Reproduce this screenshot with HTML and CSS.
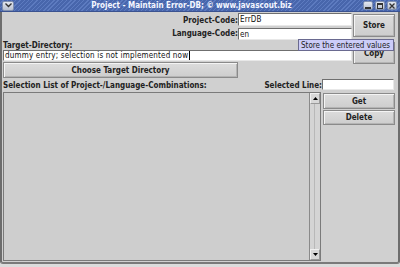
FILE: index.html
```html
<!DOCTYPE html>
<html>
<head>
<meta charset="utf-8">
<link rel="stylesheet" href="styles.css">
</head>
<body>
<div class="window">
  <div class="titlebar">
    <span class="wbtn menu"><svg width="7" height="5" viewBox="0 0 7 5"><path d="M0.5 0.5 L3.5 3.5 L6.5 0.5" fill="none" stroke="#333" stroke-width="1.4"/></svg></span>
    <span class="title">Project - Maintain Error-DB; © www.javascout.biz</span>
    <span class="ctrls">
      <span class="wbtn"><svg width="6" height="6" viewBox="0 0 6 6"><rect x="0" y="4" width="6" height="2" fill="#333"/></svg></span>
      <span class="wbtn"><svg width="6" height="6" viewBox="0 0 6 6"><rect x="0.5" y="0.5" width="5" height="5" fill="none" stroke="#333"/><rect x="0" y="0" width="6" height="2" fill="#333"/></svg></span>
      <span class="wbtn"><svg width="6" height="6" viewBox="0 0 6 6"><path d="M0.5 0.5 L5.5 5.5 M5.5 0.5 L0.5 5.5" stroke="#333" stroke-width="1.3"/></svg></span>
    </span>
  </div>
  <div class="content">
    <label class="lbl right r1">Project-Code:</label>
    <div class="field f1"><span class="txt">ErrDB</span></div>
    <button class="btn store">Store</button>

    <label class="lbl right r2">Language-Code:</label>
    <div class="field f2"><span class="txt">en</span></div>

    <label class="lbl r3">Target-Directory:</label>
    <button class="btn copy">Copy</button>

    <div class="field f4"><span class="txt">dummy entry; selection is not implemented now</span><span class="caret"></span></div>

    <button class="btn choose">Choose Target Directory</button>

    <div class="row6">
      <label class="lbl">Selection List of Project-/Language-Combinations:</label>
      <label class="lbl">Selected Line:</label>
    </div>
    <div class="field f6"></div>

    <div class="list">
      <div class="listarea"></div>
      <div class="scroll">
        <span class="arrow"><svg width="5" height="3" viewBox="0 0 5 3"><path d="M0 3 L2.5 0 L5 3 Z" fill="#000"/></svg></span>
        <span class="track"></span>
        <span class="arrow"><svg width="5" height="3" viewBox="0 0 5 3"><path d="M0 0 L2.5 3 L5 0 Z" fill="#000"/></svg></span>
      </div>
    </div>
    <div class="sidebtns">
      <button class="btn">Get</button>
      <button class="btn">Delete</button>
    </div>
  </div>
  <div class="tooltip">Store the entered values</div>
</div>
</body>
</html>
```

FILE: styles.css
```css
* { box-sizing: border-box; }
html, body { margin: 0; padding: 0; }
body {
  width: 400px;
  height: 267px;
  overflow: hidden;
  background: #dcdcdc;
  font-family: "DejaVu Sans Condensed", "DejaVu Sans", sans-serif;
}
.window {
  position: relative;
  width: 400px;
  height: 264px;
  background: #d0d0d0;
  border-left: 2px solid #6d6d6d;
  border-right: 2px solid #6d6d6d;
  border-bottom: 2px solid #7a7a7a;
  border-radius: 0 0 3px 3px;
  display: flex;
  flex-direction: column;
}
.titlebar {
  height: 12px;
  margin: 0 -2px;
  background: repeating-linear-gradient(135deg, #4866ac 0 2px, #5d7bc0 2px 3px);
  display: flex;
  align-items: center;
  padding: 0 3px 0 2px;
  border-bottom: 1px solid #3a5290;
}
.title {
  flex: 1;
  text-align: center;
  color: #f4f6ff;
  font-weight: bold;
  font-size: 8px;
  padding-left: 6px;
  white-space: nowrap;
}
.wbtn {
  width: 10px;
  height: 9px;
  background: linear-gradient(#e4e8f0, #b8c0d0);
  border: 1px solid #8090b0;
  border-radius: 2px;
  display: inline-flex;
  align-items: center;
  justify-content: center;
}
.menu { width: 12px; height: 10px; }
.ctrls { display: flex; gap: 2px; }

.content {
  flex: 1;
  display: grid;
  grid-template-columns: 235px 84px 30px 43px;
  grid-template-rows: 14px 13px 10px 11px 17px 14px 1fr;
  padding: 1px 0 1px 1px;
}
.lbl {
  font-size: 8px;
  font-weight: bold;
  color: #222;
  white-space: nowrap;
  align-self: center;
}
.right { text-align: right; }
.r1 { grid-column: 1; grid-row: 1; }
.r2 { grid-column: 1; grid-row: 2; }
.r3 { grid-column: 1 / 3; grid-row: 3; padding-top: 1px; }

.field {
  background: #fff;
  border-top: 1px solid #6f6f6f;
  border-left: 1px solid #6f6f6f;
  border-bottom: 1px solid #e8e8e8;
  border-right: 1px solid #e8e8e8;
  display: flex;
  align-items: center;
  padding-left: 1px;
  font-size: 8px;
  letter-spacing: 0.18px;
  color: #111;
  white-space: nowrap;
  overflow: hidden;
}
.caret { width: 1px; height: 9px; background: #000; margin-left: 1px; }
.f1 { grid-column: 2 / 4; grid-row: 1; height: 13px; align-self: start; }
.f2 { grid-column: 2 / 4; grid-row: 2; height: 12px; align-self: start; margin-top: 1px; }
.f4 { grid-column: 1 / 4; grid-row: 4; height: 11px; }
.f6 { grid-column: 3 / 5; grid-row: 6; height: 11px; margin: 1px 1px 0 0; align-self: start; }

.btn {
  font-family: "DejaVu Sans Condensed", "DejaVu Sans", sans-serif;
  font-size: 8px;
  font-weight: bold;
  color: #222;
  background: linear-gradient(#dcdcdc, #cdcdcd);
  border: 1px solid #8a8a8a;
  box-shadow: inset 1px 1px 0 #f4f4f4, inset -1px -1px 0 #b4b4b4;
  padding: 0;
  margin: 0;
}
.store { grid-column: 4; grid-row: 1 / 3; margin: 1px 0 3px 1px; }
.copy { grid-column: 4; grid-row: 3 / 5; margin: 2px 0 -3px 1px; }
.choose { grid-column: 1; grid-row: 5; margin: 1px 0 0 0; }

.row6 {
  grid-column: 1 / 3;
  grid-row: 6;
  display: flex;
  justify-content: space-between;
  align-items: center;
}
.list {
  grid-column: 1 / 3;
  grid-row: 7;
  margin: 0 1px 0 0;
  border: 1px solid #7a7a7a;
  background: #cecece;
  display: flex;
}
.listarea { flex: 1; }
.scroll {
  width: 11px;
  border-left: 1px solid #8a8a8a;
  display: flex;
  flex-direction: column;
  background: #d4d4d4;
}
.arrow {
  height: 11px;
  display: flex;
  align-items: center;
  justify-content: center;
  background: #d8d8d8;
  border: 1px solid #f0f0f0;
  border-right-color: #9a9a9a;
  border-bottom-color: #9a9a9a;
}
.track { flex: 1; border-left: 1px solid #b8b8b8; margin-left: 4px; }
.sidebtns {
  grid-column: 3 / 5;
  grid-row: 7;
  display: flex;
  flex-direction: column;
  gap: 1px;
  padding: 1px 0 0 1px;
}
.sidebtns .btn { height: 16px; }
.sidebtns .btn + .btn { height: 15px; }

.tooltip {
  position: absolute;
  left: 296px;
  top: 39px;
  width: 96px;
  height: 12px;
  background: #ccccf8;
  border: 1px solid #6a6a90;
  font-size: 8px;
  color: #222;
  display: flex;
  align-items: center;
  padding-left: 2px;
  white-space: nowrap;
}
```
